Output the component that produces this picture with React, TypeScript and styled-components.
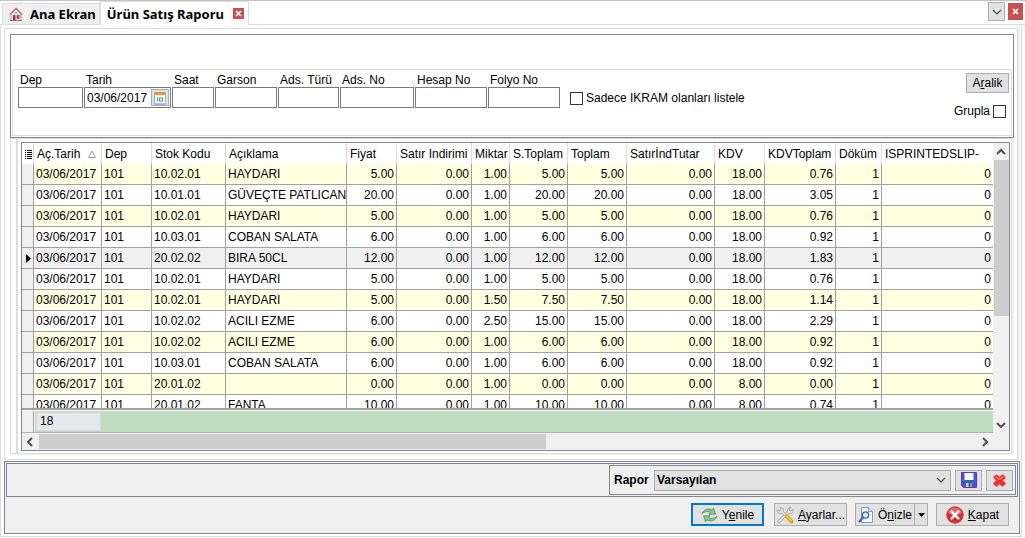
import React from "react";
import styled, { createGlobalStyle } from "styled-components";

const LINE = "#828790";
const SOFT = "#dcdcdc";

const GlobalStyle = createGlobalStyle`
  *, *::before, *::after { box-sizing: border-box; }
  html, body, #root { height: 100%; }
  body {
    margin: 0;
    background: #f0f0f0;
    color: #000;
    font: 12px/14px "Liberation Sans", Arial, sans-serif;
  }
  button, input, select { font: inherit; color: inherit; margin: 0; }
  svg { display: block; flex: none; }
`;

const Window = styled.div`
  display: flex;
  flex-direction: column;
  min-height: 100%;
  min-width: 960px;
  background: #fff;
  border-top: 1px solid #c3c3c3;
`;

const TabStrip = styled.nav`
  display: flex;
  height: 24px;
  padding-left: 2px;
  border-bottom: 1px solid ${SOFT};
`;

const Tab = styled.button<{ $active?: boolean }>`
  font: bold 13px/18px "Noto Sans", Tahoma, sans-serif;
  display: flex;
  align-items: center;
  gap: ${(p) => (p.$active ? 8 : 7)}px;
  height: ${(p) => (p.$active ? 24 : 21)}px;
  margin-top: ${(p) => (p.$active ? 0 : 2)}px;
  padding: ${(p) => (p.$active ? "0 4px 0 6px" : "0 3px 0 6px")};
  border: 1px solid ${SOFT};
  border-bottom: 0;
  background: ${(p) => (p.$active ? "#fff" : "#f0f0f0")};
`;

const TabTools = styled.div`
  display: flex;
  gap: 3px;
  margin-left: auto;
  padding: 1px 2px 0 0;
`;

const MenuButton = styled.button`
  display: grid;
  place-items: center;
  width: 17px;
  height: 19px;
  padding: 0;
  border: 1px solid #adadad;
  background: #e1e1e1;
`;

const RedClose = styled.button`
  display: grid;
  place-items: center;
  width: 15px;
  height: 17px;
  margin-top: 1px;
  padding: 0;
  border: 0;
  background: #c75050;
`;

const RedMark = styled.span`
  display: grid;
  place-items: center;
  width: 11px;
  height: 11px;
  margin-left: 1px;
  background: #c75050;
`;

const Page = styled.main`
  display: flex;
  flex: 1;
  flex-direction: column;
  margin: 0 3px 1px 0;
  padding: 3px 1px 2px 3px;
  border: 1px solid ${SOFT};
  border-top: 0;
`;

const Content = styled.section`
  display: flex;
  flex: 1;
  flex-direction: column;
  margin-right: 2px;
  padding: 5px 3px 5px 5px;
  border: 1px solid ${SOFT};
  box-shadow: 2px 0 0 #f0f0f0;
`;

const FilterPanel = styled.div`
  padding: 34px 1px 1px;
  border: 1px solid ${LINE};
`;

const FilterBody = styled.form`
  display: flex;
  height: 67px;
  padding: 3px 2px 0 5px;
  border: 1px solid ${SOFT};
`;

const Fields = styled.div`
  display: flex;
  gap: 1px;
`;

const Field = styled.label<{ $w: number }>`
  display: flex;
  flex-direction: column;
  width: ${(p) => p.$w}px;
  white-space: nowrap;
`;

const FieldName = styled.span`
  padding-left: 2px;
`;

const FieldBox = styled.span`
  display: flex;
  align-items: center;
  height: 21px;
  padding-right: 1px;
  border: 1px solid #7a7a7a;
  background: #fff;
`;

const TextInput = styled.input`
  flex: 1;
  min-width: 0;
  width: 0;
  height: 18px;
  padding: 0 0 0 2px;
  border: 0;
  outline: 0;
  background: transparent;
`;

const DateButton = styled.button`
  display: grid;
  place-items: center;
  width: 18px;
  height: 17px;
  padding: 0;
  border: 1px solid #adadad;
  background: #e1e1e1;
`;

const CheckLabel = styled.label`
  display: flex;
  align-items: center;
  gap: 3px;
  height: 14px;
  white-space: nowrap;
`;

const Check = styled.input.attrs({ type: "checkbox" })`
  appearance: none;
  width: 13px;
  height: 13px;
  border: 1px solid #333;
  background: #fff;
`;

const IkramSlot = styled.div`
  padding: 18px 0 0 10px;
`;

const RightTools = styled.div`
  display: flex;
  flex-direction: column;
  align-items: flex-end;
  gap: 11px;
  margin-left: auto;
`;

const GroupSlot = styled.div`
  padding-right: 3px;
`;

const GrayButton = styled.button`
  width: 43px;
  height: 20px;
  padding: 0;
  border: 1px solid #adadad;
  background: #e1e1e1;
`;

const GridFrame = styled.div`
  display: flex;
  flex: 1;
  margin-right: 2px;
  padding: 3px 1px 2px 0;
  border: 1px solid ${SOFT};
  box-shadow: 2px 1px 0 #f0f0f0;
`;

const Splitter = styled.div`
  width: 2px;
  margin: -3px 3px -2px 5px;
  background: ${SOFT};
`;

const GridBox = styled.div`
  display: grid;
  flex: 1;
  grid-template: minmax(0, 1fr) 17px / minmax(0, 1fr) 16px;
  min-height: 309px;
  border: 1px solid ${LINE};
  background: #f0f0f0;
`;

const GridPane = styled.div`
  display: flex;
  flex-direction: column;
  min-height: 0;
  overflow: hidden;
  border-bottom: 1px solid #b4b4b4;
  background: #fff;
`;

const RowsClip = styled.div`
  flex: 1 1 0;
  min-height: 0;
  overflow: hidden;
  border-bottom: 2px solid #a0a0a0;
`;

const Table = styled.table`
  width: 100%;
  table-layout: fixed;
  border-collapse: separate;
  border-spacing: 0;
`;

const Th = styled.th`
  height: 21px;
  padding: 1px 0 0 3px;
  border-right: 1px solid ${SOFT};
  font-weight: normal;
  text-align: left;
  white-space: nowrap;
  overflow: hidden;
  &:last-child { border-right: 0; }
`;

const SortHead = styled.span`
  display: flex;
  align-items: center;
  justify-content: space-between;
  padding-right: 5px;
`;

const Row = styled.tr<{ $tone: string }>`
  background: ${(p) => p.$tone};
`;

const Td = styled.td<{ $num?: boolean }>`
  height: 21px;
  padding: 0 2px;
  border-right: 1px solid #a0a0a0;
  border-bottom: 1px solid #a0a0a0;
  text-align: ${(p) => (p.$num ? "right" : "left")};
  white-space: nowrap;
  overflow: hidden;
  &:last-child { border-right: 0; }
`;

const Marker = styled.td`
  padding: 0 0 0 4px;
  border-right: 1px solid #a0a0a0;
  border-bottom: 1px solid #a0a0a0;
  background: #f0f0f0;
`;

const Summary = styled.div`
  display: flex;
  flex: none;
  height: 22px;
  padding-top: 1px;
`;

const SummaryGutter = styled.div`
  width: 12px;
  background: #f0f0f0;
  border-right: 1px solid #a0a0a0;
`;

const SummaryBar = styled.div`
  flex: 1;
  margin-left: 1px;
  padding: 1px;
  background: #c0dcc0;
`;

const SummaryCell = styled.output`
  display: block;
  width: 65px;
  height: 19px;
  padding: 1px 3px;
  border: 1px solid #d4dcd8;
  background: #e4e9ec;
`;

const ScrollTrack = styled.div<{ $row?: boolean }>`
  display: flex;
  flex-direction: ${(p) => (p.$row ? "row" : "column")};
  background: #f0f0f0;
`;

const ScrollArrow = styled.button`
  display: grid;
  place-items: center;
  width: 16px;
  height: 17px;
  padding: 0;
  border: 0;
  background: transparent;
`;

const ScrollRoom = styled.div<{ $row?: boolean }>`
  flex: 1;
  padding: ${(p) => (p.$row ? "1px 0 1px 1px" : "0 0 0 1px")};
`;

const Thumb = styled.div<{ $row?: boolean }>`
  width: ${(p) => (p.$row ? "54%" : "100%")};
  height: ${(p) => (p.$row ? "100%" : "61%")};
  background: #cdcdcd;
`;

const BottomPanel = styled.footer`
  margin-top: 1px;
  padding: 1px;
  border: 1px solid ${LINE};
  background: #f0f0f0;
`;

const ReportStrip = styled.div`
  display: flex;
  justify-content: flex-end;
  padding: 1px;
  border: 1px solid ${LINE};
`;

const ReportBox = styled.div`
  display: flex;
  align-items: center;
  gap: 4px;
  width: 407px;
  height: 30px;
  padding: 0 2px 0 4px;
  border: 1px solid ${LINE};
`;

const ReportName = styled.label`
  width: 36px;
  font-weight: bold;
`;

const SelectWrap = styled.div`
  display: grid;
  flex: 1;
  align-items: center;
  height: 21px;
  border: 1px solid #adadad;
  background: #e1e1e1;
  & > * { grid-area: 1 / 1; }
  & > svg { justify-self: end; margin-right: 4px; pointer-events: none; }
`;

const Select = styled.select`
  appearance: none;
  width: 100%;
  height: 19px;
  padding: 0 2px;
  border: 0;
  background: transparent;
  font-weight: bold;
`;

const SquareButton = styled.button`
  display: grid;
  place-items: center;
  width: 27px;
  height: 21px;
  padding: 0;
  border: 1px solid #adadad;
  background: #e1e1e1;
`;

const Actions = styled.div`
  display: flex;
  justify-content: flex-end;
  gap: 8px;
  padding: 6px 9px 6px 0;
`;

const ActionButton = styled.button<{ $primary?: boolean; $w: number }>`
  display: flex;
  align-items: center;
  justify-content: center;
  gap: 4px;
  width: ${(p) => p.$w}px;
  height: 23px;
  padding: 0;
  border: ${(p) => (p.$primary ? "2px solid #0078d7" : "1px solid #adadad")};
  background: #e1e1e1;
  white-space: nowrap;
`;

const Split = styled.div`
  display: flex;
  & > button + button { margin-left: -1px; }
`;

const Spaced = styled.div`
  display: flex;
  gap: 10px;
`;

const Chevron = ({ dir = 0, bold = false }: { dir?: number; bold?: boolean }) => (
  <svg width="10" height="10" viewBox="0 0 10 10" aria-hidden="true">
    <path d="M1 3l4 4 4-4" transform={`rotate(${dir} 5 5)`} fill="none" stroke="#505050" strokeWidth={bold ? 2 : 1.2} />
  </svg>
);

const Cross = () => (
  <svg width="7" height="7" viewBox="0 0 7 7" aria-hidden="true">
    <path d="M1 1l5 5M6 1L1 6" stroke="#fff" strokeWidth="1.7" />
  </svg>
);

const HomeIcon = () => (
  <svg width="14" height="14" viewBox="0 0 14 14" aria-hidden="true">
    <path d="M2 6.500v7h10v-7L7 2z" fill="#f4f6f6" stroke="#8b9694" />
    <path d="M.7 7.600L7 1.200l6.300 6.400" fill="none" stroke="#d6635a" strokeWidth="1.300" />
    <path d="M5.500 5h3v1.500h-3z" fill="#9aa5a3" />
    <path d="M4 8h2.500v5H4z" fill="#b9232b" />
    <path d="M7.500 8H10.500v4h-3z" fill="#c8414a" />
    <path d="M1 13.500h12" stroke="#6f7a78" />
  </svg>
);

const CalendarIcon = () => (
  <svg width="14" height="14" viewBox="0 0 14 14" aria-hidden="true">
    <path d="M1.500 1.500h11v12h-11z" fill="#fbfdff" stroke="#8fb3dc" />
    <path d="M2 1h10v3H2z" fill="#ee9140" />
    <path d="M4.500 6.500v4M6.500 7h3v3h-3z" fill="none" stroke="#5aa35a" strokeWidth="1.200" />
    <path d="M2 12.500h10" stroke="#a9c6e8" />
  </svg>
);

const RefreshIcon = () => (
  <svg width="17" height="16" viewBox="0 0 17 16" aria-hidden="true">
    <path d="M1 6.500C2.500 2.500 7 1 11 3l1.500-1.800L14.500 7l-6.500.3L9.500 5.200C7 4 4 4.500 1 6.500z" fill="#86c686" stroke="#4c9155" strokeWidth=".8" />
    <path d="M16 9.500c-1.500 4-6 5.500-10 3.500l-1.500 1.800L2.500 9l6.500-.3-1.500 2.100c2.500 1.200 5.500.7 8.500-1.300z" fill="#86c686" stroke="#4c9155" strokeWidth=".8" />
  </svg>
);

const ToolsIcon = () => (
  <svg width="18" height="18" viewBox="0 0 18 18" aria-hidden="true">
    <path d="M3 15.500L12.500 6" stroke="#9a9a9a" strokeWidth="3.200" strokeLinecap="round" />
    <path d="M3 15.500L12.500 6" stroke="#e8e8e8" strokeWidth="1.900" strokeLinecap="round" />
    <path d="M15 1.200L13 4l1.200 1.200 2.700-2c1 3-1.600 5.300-4.200 4.500C10 5 12 1 15 1.200z" fill="#e2e2e2" stroke="#9a9a9a" strokeWidth=".7" />
    <path d="M4.500 1.500L5 4 3.500 5 1.200 4c0 3 2.300 4 4.300 3L10 10.500 11 9 7.500 5.500C8 3.500 7 1.500 4.500 1.500z" fill="#e2e2e2" stroke="#9a9a9a" strokeWidth=".7" />
    <path d="M11 10.500l4.500 5" stroke="#e79a12" strokeWidth="4" strokeLinecap="round" />
    <path d="M11 10l4.200 4.700" stroke="#ffd24d" strokeWidth="1.500" strokeLinecap="round" />
  </svg>
);

const PreviewIcon = () => (
  <svg width="16" height="16" viewBox="0 0 16 16" aria-hidden="true">
    <path d="M3.500.5h7l4 4v11h-11z" fill="#f5f9ff" stroke="#7c9cc9" />
    <path d="M10.500.5v4h4" fill="#cfe0f5" stroke="#7c9cc9" />
    <circle cx="7.500" cy="8" r="3.200" fill="#cfe6fa" stroke="#41618f" strokeWidth="1.300" />
    <path d="M5 10.500L1.500 14.500" stroke="#3f64a8" strokeWidth="2.200" strokeLinecap="round" />
  </svg>
);

const StopIcon = () => (
  <svg width="18" height="18" viewBox="0 0 18 18" aria-hidden="true">
    <circle cx="9" cy="9" r="8.300" fill="#e02a2a" stroke="#b54040" strokeWidth=".8" />
    <path d="M2 7a7.200 7.200 0 0 1 14 0C12 9.500 6 9.500 2 7z" fill="#f08080" opacity=".7" />
    <path d="M5.700 5.700l6.600 6.600M12.300 5.700l-6.600 6.600" stroke="#fff" strokeWidth="2.600" strokeLinecap="round" />
  </svg>
);

const SaveIcon = () => (
  <svg width="16" height="16" viewBox="0 0 16 16" aria-hidden="true">
    <path d="M.5.500h15v15h-13l-2-2z" fill="#2f62d6" stroke="#8a1fc0" />
    <path d="M3.500 1h9v7h-9z" fill="#f6f8fb" />
    <path d="M4 10h8v5.500H4z" fill="#53606e" />
    <path d="M5 11h2.500v4H5z" fill="#b9d4f0" />
    <path d="M9 11h2v4H9z" fill="#8695a4" />
  </svg>
);

const DeleteIcon = () => (
  <svg width="13" height="13" viewBox="0 0 14 14" aria-hidden="true">
    <path d="M1 3l2-2h1.500L7 3.500 9.500 1H11l2 2v1.500L10.500 7 13 9.500V11l-2 2H9.500L7 10.500 4.500 13H3l-2-2V9.500L3.500 7 1 4.500z" fill="#e03a17" stroke="#f32aa5" />
    <path d="M3 3l3 2.500h2L11 3" fill="none" stroke="#f08a55" strokeWidth="1.500" />
  </svg>
);

const ListIcon = () => (
  <svg width="7" height="9" viewBox="0 0 7 9" aria-hidden="true" shapeRendering="crispEdges">
    <path d="M0 .5h1M2 .5h5M0 2.500h1M2 2.500h5M0 4.500h1M2 4.500h5M0 6.500h1M2 6.500h5M0 8.500h1M2 8.500h5" stroke="#000" />
  </svg>
);

const fields: { name: string; w: number; value?: string }[] = [
  { name: "Dep", w: 65 },
  { name: "Tarih", w: 87, value: "03/06/2017" },
  { name: "Saat", w: 42 },
  { name: "Garson", w: 62 },
  { name: "Ads. Türü", w: 61 },
  { name: "Ads. No", w: 74 },
  { name: "Hesap No", w: 72 },
  { name: "Folyo No", w: 72 },
];

const columns: { name: string; w?: number }[] = [
  { name: "Aç.Tarih", w: 68 },
  { name: "Dep", w: 50 },
  { name: "Stok Kodu", w: 74 },
  { name: "Açıklama", w: 121 },
  { name: "Fiyat", w: 50 },
  { name: "Satır Indirimi", w: 75 },
  { name: "Miktar", w: 38 },
  { name: "S.Toplam", w: 58 },
  { name: "Toplam", w: 59 },
  { name: "SatırİndTutar", w: 88 },
  { name: "KDV", w: 50 },
  { name: "KDVToplam", w: 71 },
  { name: "Döküm", w: 46 },
  { name: "ISPRINTEDSLIP-" },
];

const sales: string[][] = [
  ["10.02.01", "HAYDARI", "5.00", "1.00", "5.00", "18.00", "0.76"],
  ["10.01.01", "GÜVEÇTE PATLICAN", "20.00", "1.00", "20.00", "18.00", "3.05"],
  ["10.02.01", "HAYDARI", "5.00", "1.00", "5.00", "18.00", "0.76"],
  ["10.03.01", "COBAN SALATA", "6.00", "1.00", "6.00", "18.00", "0.92"],
  ["20.02.02", "BIRA 50CL", "12.00", "1.00", "12.00", "18.00", "1.83"],
  ["10.02.01", "HAYDARI", "5.00", "1.00", "5.00", "18.00", "0.76"],
  ["10.02.01", "HAYDARI", "5.00", "1.50", "7.50", "18.00", "1.14"],
  ["10.02.02", "ACILI EZME", "6.00", "2.50", "15.00", "18.00", "2.29"],
  ["10.02.02", "ACILI EZME", "6.00", "1.00", "6.00", "18.00", "0.92"],
  ["10.03.01", "COBAN SALATA", "6.00", "1.00", "6.00", "18.00", "0.92"],
  ["20.01.02", "", "0.00", "1.00", "0.00", "8.00", "0.00"],
  ["20.01.02", "FANTA", "10.00", "1.00", "10.00", "8.00", "0.74"],
];

const SELECTED = 4;

const rowTone = (i: number) => (i === SELECTED ? "#f0f0f0" : i % 2 === 0 ? "#ffffe1" : "#fff");

export default function App() {
  return (
    <>
      <GlobalStyle />
      <Window>
        <TabStrip>
          <Tab type="button">
            <HomeIcon />
            Ana Ekran
          </Tab>
          <Tab type="button" $active>
            Ürün Satış Raporu
            <RedMark><Cross /></RedMark>
          </Tab>
          <TabTools>
            <MenuButton type="button" aria-label="Sekmeler"><Chevron /></MenuButton>
            <RedClose type="button" aria-label="Sekmeyi kapat"><Cross /></RedClose>
          </TabTools>
        </TabStrip>
        <Page>
          <Content>
            <FilterPanel>
              <FilterBody>
                <Fields>
                  {fields.map((f) => (
                    <Field key={f.name} $w={f.w}>
                      <FieldName>{f.name}</FieldName>
                      <FieldBox>
                        <TextInput type="text" defaultValue={f.value} />
                        {f.value && (
                          <DateButton type="button" aria-label="Takvim"><CalendarIcon /></DateButton>
                        )}
                      </FieldBox>
                    </Field>
                  ))}
                </Fields>
                <IkramSlot>
                  <CheckLabel><Check />Sadece IKRAM olanları listele</CheckLabel>
                </IkramSlot>
                <RightTools>
                  <GrayButton type="button">A<u>r</u>alik</GrayButton>
                  <GroupSlot>
                    <CheckLabel>Grupla<Check /></CheckLabel>
                  </GroupSlot>
                </RightTools>
              </FilterBody>
            </FilterPanel>
            <GridFrame>
              <Splitter />
              <GridBox>
                <GridPane>
                  <RowsClip>
                    <Table>
                      <colgroup>
                        <col style={{ width: 12 }} />
                        {columns.map((c) => (
                          <col key={c.name} style={{ width: c.w }} />
                        ))}
                      </colgroup>
                      <thead>
                        <tr>
                          <Th aria-label="Sütunlar"><ListIcon /></Th>
                          {columns.map((c, i) => (
                            <Th key={c.name} scope="col">
                              {i === 0 ? (
                                <SortHead>
                                  {c.name}
                                  <svg width="8" height="8" viewBox="0 0 8 8" aria-hidden="true">
                                    <path d="M4 1L7.300 7.500H.7z" fill="none" stroke="#a0a0a0" />
                                  </svg>
                                </SortHead>
                              ) : (
                                c.name
                              )}
                            </Th>
                          ))}
                        </tr>
                      </thead>
                      <tbody>
                        {sales.map(([code, name, price, qty, total, vat, vatTotal], i) => (
                          <Row key={i} $tone={rowTone(i)}>
                            <Marker>
                              {i === SELECTED && (
                                <svg width="6" height="9" viewBox="0 0 6 9" aria-hidden="true">
                                  <path d="M0 0l5 4.500L0 9z" />
                                </svg>
                              )}
                            </Marker>
                            <Td>03/06/2017</Td>
                            <Td>101</Td>
                            <Td>{code}</Td>
                            <Td>{name}</Td>
                            {[price, "0.00", qty, total, total, "0.00", vat, vatTotal, "1", "0"].map((v, n) => (
                              <Td key={n} $num>{v}</Td>
                            ))}
                          </Row>
                        ))}
                      </tbody>
                    </Table>
                  </RowsClip>
                  <Summary>
                    <SummaryGutter />
                    <SummaryBar><SummaryCell>18</SummaryCell></SummaryBar>
                  </Summary>
                </GridPane>
                <ScrollTrack>
                  <ScrollArrow type="button" aria-label="Yukarı"><Chevron dir={180} bold /></ScrollArrow>
                  <ScrollRoom><Thumb /></ScrollRoom>
                  <ScrollArrow type="button" aria-label="Aşağı"><Chevron bold /></ScrollArrow>
                </ScrollTrack>
                <ScrollTrack $row>
                  <ScrollArrow type="button" aria-label="Sola"><Chevron dir={90} bold /></ScrollArrow>
                  <ScrollRoom $row><Thumb $row /></ScrollRoom>
                  <ScrollArrow type="button" aria-label="Sağa"><Chevron dir={-90} bold /></ScrollArrow>
                </ScrollTrack>
              </GridBox>
            </GridFrame>
          </Content>
          <BottomPanel>
            <ReportStrip>
              <ReportBox>
                <ReportName htmlFor="rapor">Rapor</ReportName>
                <SelectWrap>
                  <Select id="rapor"><option>Varsayılan</option></Select>
                  <Chevron />
                </SelectWrap>
                <SquareButton type="button" aria-label="Kaydet"><SaveIcon /></SquareButton>
                <SquareButton type="button" aria-label="Sil"><DeleteIcon /></SquareButton>
              </ReportBox>
            </ReportStrip>
            <Actions>
              <Spaced>
                <ActionButton type="button" $primary $w={73}>
                  <RefreshIcon /><span>Y<u>e</u>nile</span>
                </ActionButton>
                <ActionButton type="button" $w={73}>
                  <ToolsIcon /><span><u>A</u>yarlar...</span>
                </ActionButton>
              </Spaced>
              <Split>
                <ActionButton type="button" $w={60}>
                  <PreviewIcon /><span>Ö<u>n</u>izle</span>
                </ActionButton>
                <ActionButton type="button" $w={14} aria-label="Önizle seçenekleri">
                  <svg width="7" height="4" viewBox="0 0 7 4" aria-hidden="true"><path d="M0 0h7L3.500 4z" /></svg>
                </ActionButton>
              </Split>
              <ActionButton type="button" $w={73}>
                <StopIcon /><span><u>K</u>apat</span>
              </ActionButton>
            </Actions>
          </BottomPanel>
        </Page>
      </Window>
    </>
  );
}
